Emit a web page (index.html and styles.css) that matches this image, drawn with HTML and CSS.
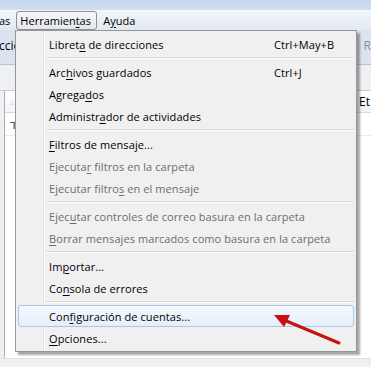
FILE: index.html
```html
<!DOCTYPE html>
<html lang="es">
<head>
    <meta charset="UTF-8">
    <meta name="viewport" content="width=device-width, initial-scale=1.0">
    <title>Herramientas</title>
    <link rel="stylesheet" href="styles.css">
</head>
<body>
    <div class="window">
        <div class="titlebar"></div>

        <div class="menubar">
            <span class="mb-item mb-cut">as</span>
            <span class="mb-item mb-open">Herramien<u>t</u>as</span>
            <span class="mb-item">A<u>y</u>uda</span>
        </div>

        <div class="toolbar">
            <span class="tb-label">ccio</span>
            <span class="tb-label tb-faded">R</span>
        </div>

        <div class="strip"></div>

        <div class="pane">
            <div class="pane-head">
                <span class="sort-mark">&#9651;</span>
                <span class="col-name">Et</span>
            </div>
            <div class="pane-row">
                <span class="row-icon">&#8504;</span>
            </div>
            <div class="pane-body"></div>
        </div>

        <div class="statusbar"></div>
    </div>

    <!-- dropdown of the Herramientas menu -->
    <div class="menu">
        <div class="item"><span>Libret<u>a</u> de direcciones</span><span class="key">Ctrl+May+B</span></div>
        <div class="sep"></div>
        <div class="item"><span>Arc<u>h</u>ivos guardados</span><span class="key">Ctrl+J</span></div>
        <div class="item"><span>Agrega<u>d</u>os</span></div>
        <div class="item"><span>Administr<u>a</u>dor de actividades</span></div>
        <div class="sep"></div>
        <div class="item"><span><u>F</u>iltros de mensaje...</span></div>
        <div class="item disabled"><span>Ejecuta<u>r</u> filtros en la carpeta</span></div>
        <div class="item disabled"><span>Ejecutar filtro<u>s</u> en el mensaje</span></div>
        <div class="sep"></div>
        <div class="item disabled"><span>Ejec<u>u</u>tar controles de correo basura en la carpeta</span></div>
        <div class="item disabled"><span><u>B</u>orrar mensajes marcados como basura en la carpeta</span></div>
        <div class="sep"></div>
        <div class="item"><span>Im<u>p</u>ortar...</span></div>
        <div class="item"><span>Co<u>n</u>sola de errores</span></div>
        <div class="sep"></div>
        <div class="item hover"><span>Con<u>f</u>iguración de cuentas...</span></div>
        <div class="item"><span><u>O</u>pciones...</span></div>
    </div>

    <svg class="arrow" width="371" height="367" viewBox="0 0 371 367">
        <line x1="339" y1="343" x2="284" y2="320" stroke="#c81212" stroke-width="3" stroke-linecap="round"/>
        <polygon points="274,315 290,315 284,327" fill="#c81212"/>
    </svg>
</body>
</html>
```

FILE: styles.css
```css
body {
    margin: 0;
    font-family: 'Open Sans', 'Noto Sans', sans-serif;
    font-size: 11px;
    color: #000;
    background-color: #f0f0f0;
}

u {
    text-decoration-thickness: 1px;
    text-underline-offset: 2px;
}

/* Background window */
.window {
    width: 371px;
    height: 367px;
    overflow: hidden;
    display: flex;
    flex-direction: column;
}

.titlebar {
    height: 10px;
    background: linear-gradient(to bottom, #c3d6ec, #d0def0);
}

.menubar {
    height: 20px;
    display: flex;
    align-items: stretch;
    background: linear-gradient(to bottom, #f3f6fb, #e2e9f3);
}

.mb-item {
    display: flex;
    align-items: center;
    padding: 0 6px;
    box-sizing: border-box;
}

.mb-cut {
    margin-left: -7px;
}

.mb-open {
    width: 81px;
    padding-left: 3px;
    margin-top: 1px;
    border: 1px solid #8d8f92;
    border-radius: 3px;
    background: linear-gradient(to bottom, #f6f7f9, #e4e8ee);
}

.toolbar {
    height: 35px;
    display: flex;
    justify-content: space-between;
    align-items: flex-start;
    background-color: #dbe3ee;
    border-bottom: 1px solid #b9c4d3;
    box-sizing: border-box;
}

.tb-label {
    padding-top: 7px;
    margin-left: -1px;
    font-size: 12px;
}

.tb-faded {
    color: #8a8f96;
}

.strip {
    height: 26px;
    background-color: #eef0f3;
    border-bottom: 1px solid #c6ccd5;
    box-sizing: border-box;
}

.pane {
    flex: 1;
    display: flex;
    flex-direction: column;
    margin-left: 4px;
    border-left: 1px solid #a7afb9;
    background-color: #fff;
}

.pane-head {
    height: 21px;
    display: flex;
    justify-content: space-between;
    align-items: center;
    background: linear-gradient(to bottom, #ffffff, #f1f4f8);
    border-bottom: 1px solid #d5dae0;
}

.sort-mark {
    margin-left: 5px;
    font-size: 6px;
    color: #b6bcc4;
}

.col-name {
    font-size: 12px;
    margin-right: 1px;
}

.pane-row {
    height: 22px;
    display: flex;
    align-items: center;
    border-bottom: 1px solid #ececec;
}

.row-icon {
    margin-left: 5px;
    font-size: 12px;
    font-weight: bold;
    color: #555;
}

.pane-body {
    flex: 1;
}

.statusbar {
    height: 8px;
    background-color: #f0f0f0;
    border-top: 1px solid #dfe3e8;
}

/* Dropdown menu */
.menu {
    position: absolute;
    left: 15px;
    top: 30px;
    width: 342px;
    padding: 2px;
    box-sizing: border-box;
    border: 1px solid #979797;
    background: linear-gradient(to right, #f0f0f0 27px, #e2e3e3 27px, #e2e3e3 28px, #ffffff 28px, #ffffff 29px, #f0f0f0 29px);
    box-shadow: 3px 3px 2px rgba(0, 0, 0, 0.35);
}

.item {
    height: 22px;
    display: flex;
    justify-content: space-between;
    align-items: center;
    padding: 0 14px 0 30px;
    box-sizing: border-box;
    border: 1px solid transparent;
    border-radius: 3px;
    white-space: nowrap;
    letter-spacing: 0.08px;
}

.item .key {
    width: 65px;
}

.disabled {
    color: #6d6d6d;
}

.hover {
    border-color: #a8c8ea;
    background: linear-gradient(to bottom, #f5f9fe, #e6eefa);
}

.sep {
    height: 0;
    margin: 2px 0 2px 28px;
    border-top: 1px solid #d7d7d7;
    border-bottom: 1px solid #ffffff;
}

.arrow {
    position: absolute;
    left: 0;
    top: 0;
}
```
